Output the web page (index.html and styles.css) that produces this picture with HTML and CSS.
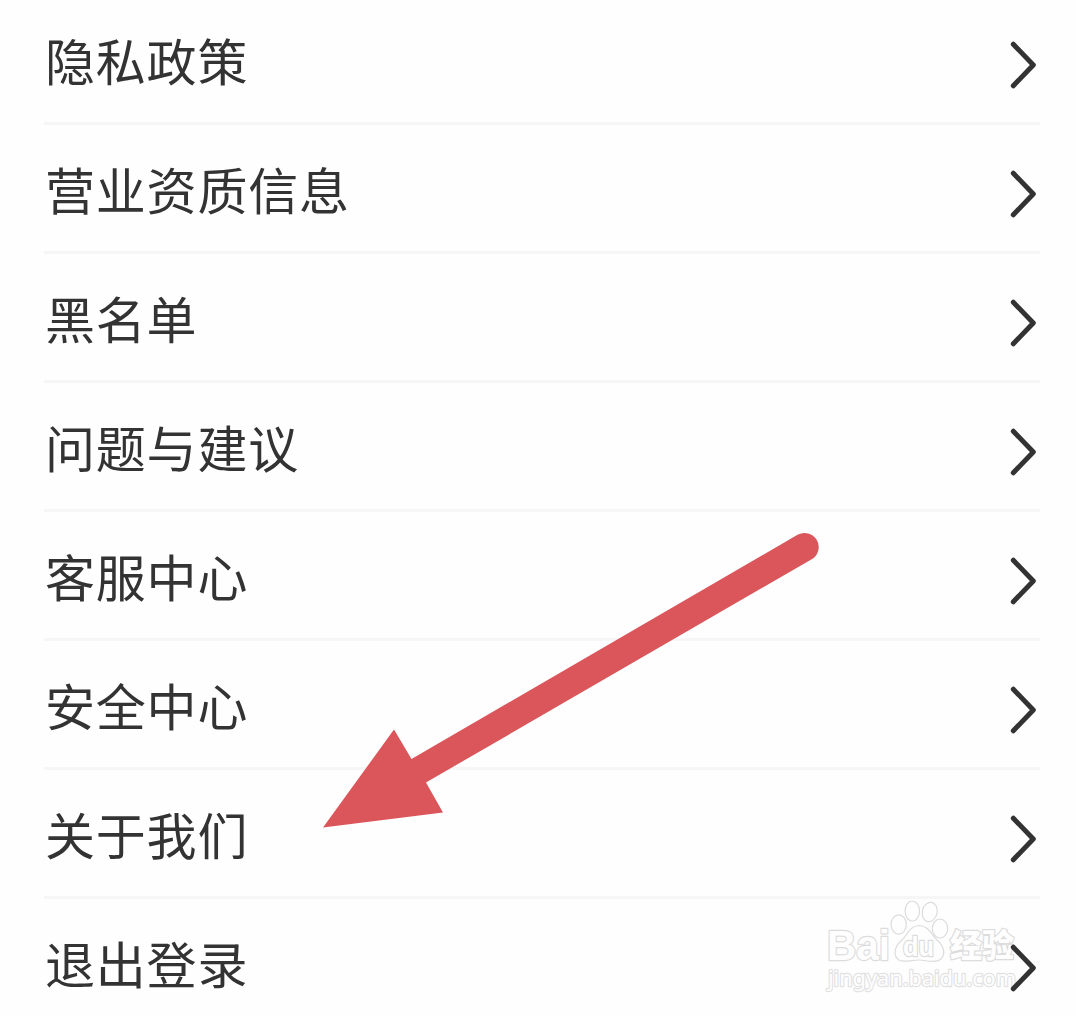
FILE: index.html
```html
<!DOCTYPE html>
<html lang="zh-CN">
<head>
    <meta charset="UTF-8">
    <meta name="viewport" content="width=device-width, initial-scale=1.0">
    <title>设置</title>
    <link rel="stylesheet" href="styles.css">
</head>
<body>
    <div class="page">
        <ul class="menu">
            <li class="menu-item"><span class="label">隐私政策</span><svg class="chevron" viewBox="0 0 30 50"><path d="M3.3 4.2 L23.3 25 L3.3 45.8"/></svg></li>
            <li class="menu-item"><span class="label">营业资质信息</span><svg class="chevron" viewBox="0 0 30 50"><path d="M3.3 4.2 L23.3 25 L3.3 45.8"/></svg></li>
            <li class="menu-item"><span class="label">黑名单</span><svg class="chevron" viewBox="0 0 30 50"><path d="M3.3 4.2 L23.3 25 L3.3 45.8"/></svg></li>
            <li class="menu-item"><span class="label">问题与建议</span><svg class="chevron" viewBox="0 0 30 50"><path d="M3.3 4.2 L23.3 25 L3.3 45.8"/></svg></li>
            <li class="menu-item"><span class="label">客服中心</span><svg class="chevron" viewBox="0 0 30 50"><path d="M3.3 4.2 L23.3 25 L3.3 45.8"/></svg></li>
            <li class="menu-item"><span class="label">安全中心</span><svg class="chevron" viewBox="0 0 30 50"><path d="M3.3 4.2 L23.3 25 L3.3 45.8"/></svg></li>
            <li class="menu-item"><span class="label">关于我们</span><svg class="chevron" viewBox="0 0 30 50"><path d="M3.3 4.2 L23.3 25 L3.3 45.8"/></svg></li>
            <li class="menu-item"><span class="label">退出登录</span><svg class="chevron" viewBox="0 0 30 50"><path d="M3.3 4.2 L23.3 25 L3.3 45.8"/></svg></li>
        </ul>

        <!-- Seta vermelha -->
        <svg class="arrow" viewBox="320 525 505 310">
            <path d="M323 827.5 L394 729.5 L411.5 759 L798 534.5 A14.2 14.2 0 0 1 813 558.5 L426 782.5 L443 812.5 Z"/>
        </svg>

        <!-- Marca d'água -->
        <svg class="watermark" viewBox="820 895 205 105">
            <text class="wm-logo" x="827" y="960" textLength="63" lengthAdjust="spacingAndGlyphs">Bai</text>
            <ellipse cx="898.7" cy="924.5" rx="7.6" ry="9.7"/>
            <ellipse cx="912.3" cy="911" rx="7.2" ry="10"/>
            <ellipse cx="929.7" cy="912" rx="7.4" ry="9.8" transform="rotate(12 929.7 912)"/>
            <ellipse cx="940" cy="928.5" rx="7.7" ry="9.5"/>
            <path d="M919 925.5 C909 926 907 936 901 941 C894 947 893 956 899 960 C904 963 912 960 919 960 C926 960 935 964 941 959 C946 954 944 946 937 940 C931 934 929 926 919 925.5 Z"/>
            <text class="wm-du" x="903" y="955.5" textLength="31" lengthAdjust="spacingAndGlyphs">du</text>
            <text class="wm-cn" x="950" y="957" textLength="64" lengthAdjust="spacingAndGlyphs">经验</text>
            <text class="wm-url" x="828" y="986" textLength="188" lengthAdjust="spacingAndGlyphs">jingyan.baidu.com</text>
        </svg>
    </div>
</body>
</html>
```
FILE: styles.css
```css
body {
    margin: 0;
    background-color: #fefefe;
    color: #333;
    font-family: "Noto Sans CJK SC", sans-serif;
}

.page {
    position: relative;
    height: 1016px;
    overflow: hidden;
}

.menu {
    position: relative;
    z-index: 1;
    list-style: none;
    margin: 0;
    padding: 0 36px 0 44px;
    display: flex;
    flex-direction: column;
}

.menu-item {
    box-sizing: border-box;
    height: 129px;
    display: flex;
    justify-content: space-between;
    align-items: center;
    border-bottom: 3px solid #f6f6f6;
}

.menu-item:first-child {
    margin-top: -4px;
}

.menu-item:last-child {
    border-bottom-color: transparent;
}

.label {
    font-size: 50px;
    line-height: 72px;
    letter-spacing: 0.8px;
    padding-left: 1px;
}

.chevron {
    width: 30px;
    height: 50px;
    margin-top: 12px;
}

.chevron path {
    fill: none;
    stroke: #333;
    stroke-width: 5;
    stroke-linecap: round;
    stroke-linejoin: round;
}

/* Seta */
.arrow {
    position: absolute;
    z-index: 2;
    left: 320px;
    top: 525px;
    width: 505px;
    height: 310px;
    fill: #da565b;
}

/* Marca d'água */
.watermark {
    position: absolute;
    z-index: 0;
    left: 820px;
    top: 895px;
    width: 205px;
    height: 105px;
    fill: #fefefe;
    stroke: #dcdcdc;
    stroke-width: 1.2;
}

.watermark text {
    paint-order: stroke;
    stroke-width: 2.4;
    stroke-linejoin: round;
}

.wm-logo {
    font: bold 42px "Liberation Sans", sans-serif;
}

.wm-du {
    font: bold 27px "Liberation Sans", sans-serif;
}

.wm-cn {
    font: 900 32px "Noto Sans CJK SC", sans-serif;
}

.wm-url {
    font: 22px "Noto Sans", sans-serif;
    stroke: #e2e2e2;
}
```
